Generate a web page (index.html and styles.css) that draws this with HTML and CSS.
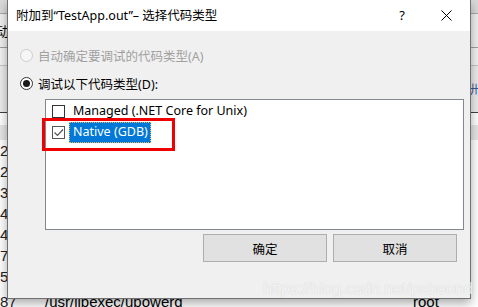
FILE: index.html
```html
<!DOCTYPE html>
<html lang="zh-CN">
<head>
  <meta charset="UTF-8">
  <meta name="viewport" content="width=device-width, initial-scale=1.0">
  <title>附加到“TestApp.out”– 选择代码类型</title>
  <link rel="stylesheet" href="styles.css">
</head>
<body>
  <div class="desktop">
    <!-- the process list window behind the dialog -->
    <div class="app">
      <div class="app-menu"></div>
      <div class="app-tabs"><span class="app-tab">动</span></div>
      <div class="app-bar"></div>
      <div class="app-head"><span class="app-head-label">卅</span></div>
      <div class="app-gap"></div>
      <div class="app-band"></div>
      <div class="proc-list">
        <div class="proc-row"><span class="pid">25</span><span class="cmd"></span><span class="user"></span></div>
        <div class="proc-row"><span class="pid">28</span><span class="cmd"></span><span class="user"></span></div>
        <div class="proc-row"><span class="pid">33</span><span class="cmd"></span><span class="user"></span></div>
        <div class="proc-row"><span class="pid">40</span><span class="cmd"></span><span class="user"></span></div>
        <div class="proc-row"><span class="pid">46</span><span class="cmd"></span><span class="user"></span></div>
        <div class="proc-row"><span class="pid">79</span><span class="cmd"></span><span class="user"></span></div>
        <div class="proc-row"><span class="pid">5</span><span class="cmd"></span><span class="user"></span></div>
        <div class="proc-row"><span class="pid">87</span><span class="cmd">/usr/libexec/upowerd</span><span class="user">root</span></div>
      </div>
    </div>

    <div class="dialog">
      <div class="dialog-title">
        <span class="title-text">附加到“TestApp.out”– 选择代码类型</span>
        <span class="title-help">?</span>
        <span class="title-close">
          <svg width="11" height="11" viewBox="0 0 11 11"><path d="M0.5 0.5 L10.5 10.5 M10.5 0.5 L0.5 10.5" stroke="#000" stroke-width="1" fill="none"/></svg>
        </span>
      </div>

      <div class="dialog-body">
        <label class="radio disabled"><span class="radio-dot"></span>自动确定要调试的代码类型(A)</label>
        <label class="radio"><span class="radio-dot on"></span>调试以下代码类型(D):</label>

        <div class="type-list">
          <div class="type-row"><span class="check"></span><span class="type-label">Managed (.NET Core for Unix)</span></div>
          <div class="type-row"><span class="check checked">
            <svg width="11" height="11" viewBox="0 0 11 11"><path d="M1.5 5.5 L4.5 8.5 L10 2.5" stroke="#555" stroke-width="1.2" fill="none"/></svg>
          </span><span class="type-label selected">Native (GDB)</span></div>
        </div>

        <div class="dialog-buttons">
          <button class="btn">确定</button>
          <button class="btn">取消</button>
        </div>
      </div>

      <div class="mark"></div>
    </div>

    <div class="watermark">https://blog.csdn.net/psbeond</div>
  </div>
</body>
</html>
```

FILE: styles.css
```css
* {
  box-sizing: border-box;
  margin: 0;
  padding: 0;
}

body {
  width: 478px;
  height: 307px;
  overflow: hidden;
  background: #ffffff;
  font-family: "Noto Sans", "Noto Sans CJK SC", sans-serif;
  font-size: 12px;
  color: #000;
}

.desktop {
  position: relative;
  width: 478px;
  height: 307px;
  overflow: hidden;
}

/* background window */
.app {
  height: 100%;
}

.app-menu {
  height: 14px;
  background: #dadada;
  border-bottom: 1px solid #a8a8a8;
}

.app-tabs {
  height: 34px;
  background: #f0f0f0;
  border-bottom: 1px solid #a0a0a0;
  display: flex;
  align-items: center;
}

.app-tab {
  font-size: 13px;
  margin-left: -4px;
}

.app-bar {
  height: 18px;
  background: #f3f3f3;
  border-bottom: 1px solid #c4c4c4;
}

.app-head {
  height: 47px;
  background: #ececec;
  border-bottom: 1px solid #404040;
  display: flex;
  justify-content: flex-end;
  align-items: flex-end;
  padding-bottom: 14px;
}

.app-head-label {
  font-size: 12px;
  color: #3a5a9a;
  margin-right: -4px;
}

.app-gap {
  height: 12px;
}

.app-band {
  height: 15px;
  background: #e6e6e6;
}

.proc-list {
  display: flex;
  flex-direction: column;
}

.proc-row {
  display: grid;
  grid-template-columns: 45px 1fr 65px;
  height: 21px;
  flex-shrink: 0;
  align-items: center;
  font-family: "Liberation Sans", Arial, sans-serif;
  font-size: 15px;
}

.proc-row:last-child {
  margin-top: 4px;
}

.pid {
  color: #222;
}

/* dialog */
.dialog {
  position: absolute;
  left: 7px;
  top: 0;
  width: 464px;
  height: 299px;
  background: #f0f0f0;
  border: 1px solid #707070;
  border-top: none;
  box-shadow: 0 4px 10px rgba(0, 0, 0, 0.35);
  display: flex;
  flex-direction: column;
}

.dialog-title {
  height: 31px;
  background: #ffffff;
  display: flex;
  align-items: center;
  padding-left: 8px;
}

.title-text {
  flex: 1;
  font-size: 12.5px;
  margin-top: -2px;
}

.title-help {
  width: 20px;
  text-align: center;
  font-size: 13px;
  margin-right: 24px;
  margin-top: -2px;
}

.title-close {
  width: 20px;
  display: flex;
  justify-content: center;
  margin-right: 14px;
  margin-top: -1px;
}

.dialog-body {
  flex: 1;
  display: flex;
  flex-direction: column;
  padding: 16px 6px 0 12px;
}

.radio {
  display: flex;
  align-items: center;
  height: 16px;
  gap: 5px;
  font-size: 12.5px;
}

.radio + .radio {
  margin-top: 12px;
}

.radio.disabled {
  color: #a0a0a0;
}

.radio-dot {
  width: 13px;
  height: 13px;
  border: 1px solid #333;
  border-radius: 50%;
  background: #fff;
  display: flex;
  align-items: center;
  justify-content: center;
}

.radio.disabled .radio-dot {
  border-color: #cccccc;
  background: #f6f6f6;
}

.radio-dot.on::after {
  content: "";
  width: 7px;
  height: 7px;
  border-radius: 50%;
  background: #1a1a1a;
}

.type-list {
  margin-top: 8px;
  margin-left: 25px;
  height: 131px;
  background: #ffffff;
  border: 1px solid #828790;
  padding: 1px 0 0 6px;
  display: flex;
  flex-direction: column;
}

.type-row {
  height: 21px;
  display: flex;
  align-items: center;
}

.check {
  width: 13px;
  height: 13px;
  border: 1px solid #333;
  background: #fff;
  margin-right: 4px;
  display: flex;
  align-items: center;
  justify-content: center;
}

.check.checked {
  border-color: #555;
}

.type-label {
  height: 21px;
  line-height: 20px;
  padding: 0 3px 0 4px;
  font-size: 12.5px;
}

.type-label.selected {
  background: #0078d7;
  color: #fff;
  outline: 1px dotted #e7b76a;
  outline-offset: -1px;
}

.dialog-buttons {
  display: flex;
  justify-content: flex-end;
  gap: 6px;
  margin-top: 4px;
  padding-right: 7px;
}

.btn {
  width: 124px;
  height: 28px;
  background: #e1e1e1;
  border: 1px solid #adadad;
  font-family: "Noto Sans CJK SC", sans-serif;
  font-size: 12.5px;
  color: #000;
}

/* red annotation box */
.mark {
  position: absolute;
  left: 34px;
  top: 118px;
  width: 133px;
  height: 33px;
  border: 3px solid #f00000;
}

.watermark {
  position: absolute;
  left: 263px;
  top: 279px;
  font-family: "Liberation Sans", Arial, sans-serif;
  font-size: 16.5px;
  color: rgba(255, 255, 255, 0.75);
  text-shadow: 0 0 1px rgba(150, 150, 150, 0.45);
  letter-spacing: -0.2px;
}
```
